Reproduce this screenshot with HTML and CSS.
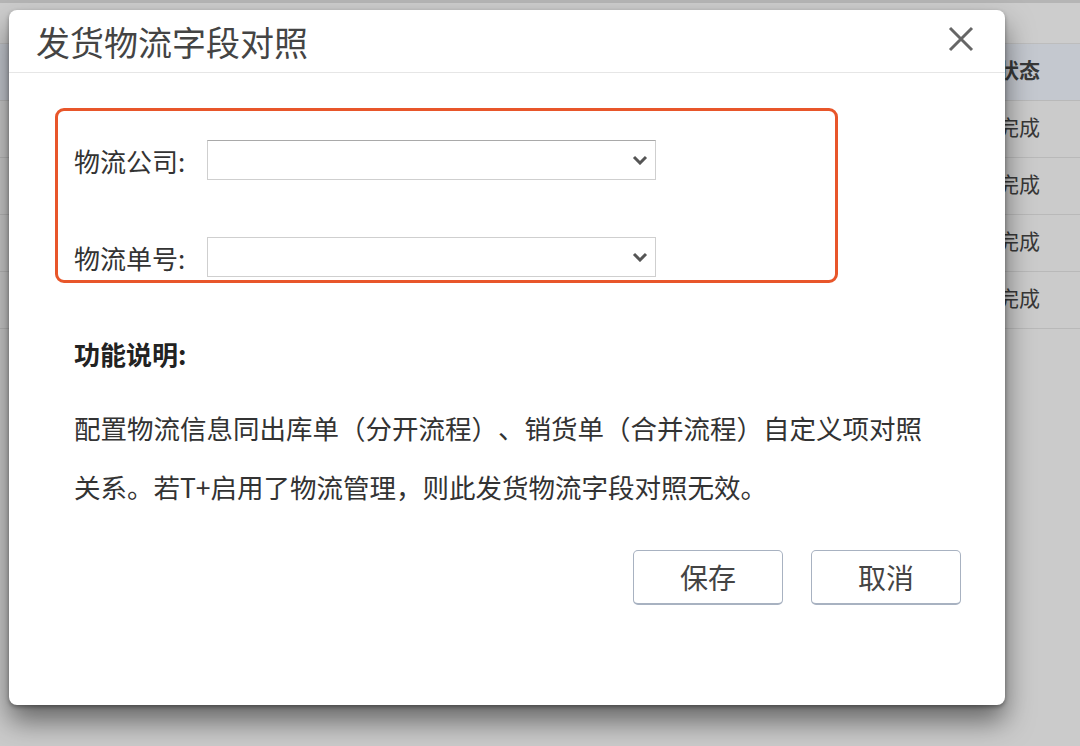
FILE: index.html
```html
<!DOCTYPE html>
<html>
<head>
    <meta charset="utf-8">
    <link rel="stylesheet" href="styles.css">
</head>
<body>
    <div class="page">
        <div class="topbar"></div>
        <div class="toolbar"></div>
        <div class="grid">
            <div class="grid-row grid-head"><span class="cell">状态</span></div>
            <div class="grid-row"><span class="cell">完成</span></div>
            <div class="grid-row"><span class="cell">完成</span></div>
            <div class="grid-row"><span class="cell">完成</span></div>
            <div class="grid-row"><span class="cell">完成</span></div>
        </div>
    </div>

    <div class="dialog">
        <div class="dialog-head">
            <span class="dialog-title">发货物流字段对照</span>
            <span class="dialog-close">
                <svg width="26" height="26" viewBox="0 0 26 26"><path d="M2 2 L24 24 M24 2 L2 24" stroke="#666" stroke-width="3" fill="none"/></svg>
            </span>
        </div>
        <div class="dialog-body">
            <div class="field-box">
                <div class="field-row">
                    <label class="field-label">物流公司:</label>
                    <div class="select">
                        <svg class="chevron" width="16" height="10" viewBox="0 0 16 10"><path d="M2 2 L8 8 L14 2" stroke="#555" stroke-width="3" fill="none"/></svg>
                    </div>
                </div>
                <div class="field-row second">
                    <label class="field-label">物流单号:</label>
                    <div class="select">
                        <svg class="chevron" width="16" height="10" viewBox="0 0 16 10"><path d="M2 2 L8 8 L14 2" stroke="#555" stroke-width="3" fill="none"/></svg>
                    </div>
                </div>
            </div>
            <p class="note-title">功能说明:</p>
            <p class="note-text">配置物流信息同出库单（分开流程）、销货单（合并流程）自定义项对照关系。若T+启用了物流管理，则此发货物流字段对照无效。</p>
            <div class="actions">
                <button class="btn">保存</button>
                <button class="btn">取消</button>
            </div>
        </div>
    </div>
</body>
</html>
```

FILE: styles.css
```css
html, body {
    margin: 0;
    padding: 0;
}

body {
    background-color: #cbcbcb;
    font-family: "Noto Sans CJK SC", "Noto Sans", sans-serif;
    color: #333;
    height: 746px;
    overflow: hidden;
    text-spacing-trim: space-all;
}

.topbar {
    height: 3px;
    background-color: #b5b5b5;
}
.toolbar {
    height: 40px;
    background-color: #cdcdcd;
}

.grid-row {
    height: 50px;
    padding-bottom: 6px;
    border-bottom: 1px solid #b9b9b9;
    display: flex;
    align-items: center;
}
.grid-head {
    background-color: #c4c8cf;
    border-top: 1px solid #bdbdbd;
    font-weight: bold;
}
.cell {
    margin-left: 998px;
    font-size: 21px;
    color: #383838;
}

.dialog {
    position: absolute;
    left: 9px;
    top: 10px;
    width: 996px;
    height: 695px;
    background-color: #fff;
    border-radius: 8px;
    box-shadow: 0 16px 28px rgba(0, 0, 0, 0.5), 0 2px 4px rgba(0, 0, 0, 0.35);
}

.dialog-head {
    height: 62px;
    border-bottom: 1px solid #e6e6e6;
    display: flex;
    align-items: center;
    justify-content: space-between;
    padding: 0 31px 0 27px;
}
.dialog-title {
    font-size: 34px;
    color: #444;
}
.dialog-close {
    display: flex;
    margin-top: -4px;
}

.dialog-body {
    padding: 35px 44px 0 46px;
}

.field-box {
    width: 761px;
    height: 169px;
    border: 3px solid #e8562a;
    border-radius: 9px;
    padding: 0 0 0 16px;
    box-sizing: content-box;
}
.field-row {
    display: flex;
    align-items: center;
    margin-top: 29px;
}
.field-row.second {
    margin-top: 57px;
}
.field-label {
    width: 133px;
    font-size: 26px;
    color: #333;
}
.select {
    width: 440px;
    height: 38px;
    border: 1px solid #cfcfcf;
    border-top-color: #a9a9a9;
    display: flex;
    align-items: center;
    justify-content: flex-end;
    padding-right: 7px;
    box-sizing: content-box;
}
.second .select {
    border-top-color: #cfcfcf;
}

.note-title {
    margin: 53px 0 0 19px;
    font-size: 26px;
    line-height: 36px;
    font-weight: bold;
    color: #222;
}
.note-text {
    margin: 26px 0 0 19px;
    width: 860px;
    font-size: 26.5px;
    line-height: 59px;
    color: #333;
}

.actions {
    display: flex;
    justify-content: flex-end;
    gap: 28px;
    margin-top: 34px;
}
.btn {
    width: 150px;
    height: 55px;
    background-color: #fff;
    border: 1px solid #a8b2c1;
    border-bottom-width: 2px;
    border-radius: 5px;
    font-family: "Noto Sans CJK SC", sans-serif;
    font-size: 28px;
    color: #444;
    padding: 0;
}
```
